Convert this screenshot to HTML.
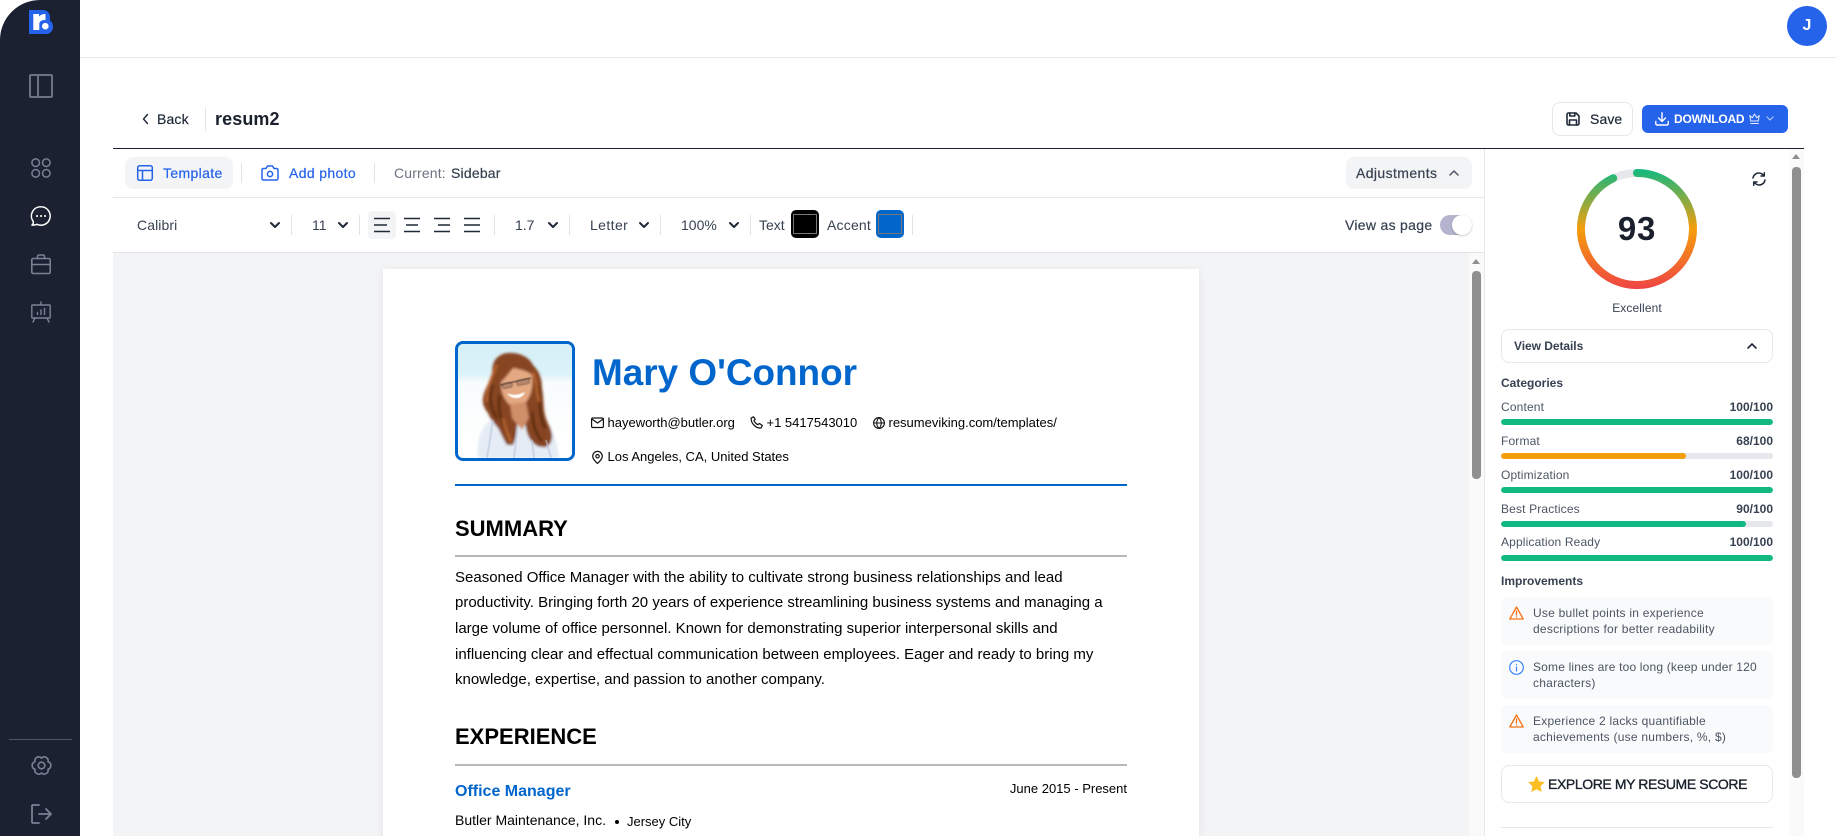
<!DOCTYPE html>
<html lang="en"><head><meta charset="utf-8"><title>resum2</title>
<style>
*{box-sizing:border-box;margin:0;padding:0}
html,body{width:1836px;height:836px;overflow:hidden;background:#fff;font-family:"Liberation Sans",Arial,sans-serif;color:#1f2937}
.a{position:absolute}
.t{position:absolute;white-space:nowrap;line-height:20px;height:20px}
.m{-webkit-text-stroke:.2px currentColor}
svg.i{position:absolute;fill:none;stroke:currentColor;stroke-linecap:round;stroke-linejoin:round;overflow:visible}
.sep{position:absolute;width:1px;background:#dfe2e7}
.lbl{font-size:12px;color:#4b5563;letter-spacing:.15px}
.val{font-size:12px;font-weight:700;color:#374151}
.bar{position:absolute;left:1501px;width:272px;height:6px;border-radius:3px;background:#e5e7eb;overflow:hidden}
.bar i{display:block;height:6px;border-radius:3px;background:#10b981}
.card{position:absolute;left:1501px;width:272px;height:48px;background:#f9fafb;border-radius:6px}
.imp{font-size:12px;color:#4b5563;line-height:16px;height:16px;letter-spacing:.24px}
.r{color:#000}
.p{font-size:15px;color:#000}
</style></head><body>

<svg width="0" height="0" style="position:absolute"><defs>
<symbol id="chev" viewBox="0 0 12 12"><path d="M2 4l4 4 4-4" fill="none" stroke="#1f2937" stroke-width="2" stroke-linecap="round" stroke-linejoin="round"/></symbol>
</defs></svg>

<!-- sidebar -->
<div class="a" style="left:0;top:0;width:80px;height:836px;background:#1b2130;border-top-left-radius:40px"></div>
<svg class="a" style="left:29px;top:10px" width="24" height="24" viewBox="0 0 24 24">
<path d="M0 0H14C18 0 21 3 21 7V10.500C23 12 24 14 24 16.500V17C24 21 21 24 17 24H0Z" fill="#2563eb"/>
<path d="M4.300 20V4H10V6.500C11.500 4.800 13.500 4 16.500 4V10C12.500 10 10.300 11 10.300 14.500V20Z" fill="#fff"/>
<circle cx="16.300" cy="16.200" r="3.300" fill="#fff"/></svg>
<svg class="i" style="left:29px;top:74px;color:#6b7280;stroke-width:2" width="24" height="24" viewBox="0 0 24 24"><rect x="1" y="1" width="22" height="22" rx="1"/><path d="M9 1v22"/></svg>
<svg class="i" style="left:31px;top:158px;color:#788296;stroke-width:1.500" width="20" height="20" viewBox="0 0 20 20"><circle cx="4.700" cy="4.700" r="3.800"/><circle cx="15.300" cy="4.700" r="3.800"/><circle cx="4.700" cy="15.300" r="3.800"/><circle cx="15.300" cy="15.300" r="3.800"/></svg>
<svg class="i" style="left:31px;top:206px;color:#fff;stroke-width:1.500" width="20" height="20" viewBox="0 0 20 20"><path d="M10 .8a9.200 9.200 0 1 1-4 17.500c-1.500.8-3 .9-5 .8 1-.9 1.500-2 1.300-3.500A9.200 9.200 0 0 1 10 .8z"/><path d="M6 10h.1M10 10h.1M14 10h.1" stroke-width="2"/></svg>
<svg class="i" style="left:31px;top:254px;color:#788296;stroke-width:1.600" width="20" height="20" viewBox="0 0 20 20"><rect x=".8" y="4.500" width="18.400" height="15" rx="1.500"/><path d="M6.500 4.500V2.500a1.500 1.500 0 0 1 1.500-1.500h4a1.500 1.500 0 0 1 1.500 1.500v2M.8 10.500h6.700M12.500 10.500h6.700M8 10.500h4"/></svg>
<svg class="i" style="left:31px;top:302px;color:#788296;stroke-width:1.400" width="20" height="20" viewBox="0 0 20 20"><rect x=".8" y="3" width="18.400" height="13" rx=".5"/><path d="M10 0v3M4 16l-2 4M16 16l2 4M6.500 12.500v-2M10 12.500v-4.500M13.500 12.500V6.500"/></svg>
<div class="a" style="left:9px;top:739px;width:63px;height:1px;background:#4b5563"></div>
<svg class="i" style="left:31px;top:755px;color:#788296;stroke-width:1.600" width="21" height="21" viewBox="0 0 21 21"><circle cx="10.500" cy="10.500" r="3.300"/><path d="M10.500 3A3.900 3.900 0 0 1 17 6.750A3.900 3.900 0 0 1 17 14.250A3.900 3.900 0 0 1 10.500 18A3.900 3.900 0 0 1 4 14.250A3.900 3.900 0 0 1 4 6.750A3.900 3.900 0 0 1 10.500 3Z"/></svg>
<svg class="i" style="left:31px;top:804px;color:#788296;stroke-width:1.800" width="21" height="20" viewBox="0 0 21 20"><path d="M8 1H2a1 1 0 0 0-1 1v16a1 1 0 0 0 1 1h6M8 10h12M15 5l5 5-5 5"/></svg>

<!-- top header -->
<div class="a" style="left:80px;top:57px;width:1756px;height:1px;background:#e8e9ec"></div>
<div class="a" style="left:1787px;top:6px;width:40px;height:40px;border-radius:50%;background:#2563eb;color:#fff;font-weight:700;font-size:16px;line-height:40px;text-align:center">J</div>

<!-- title row -->
<svg class="i" style="left:141px;top:113px;color:#1f2937;stroke-width:1.400" width="8" height="12" viewBox="0 0 8 12"><path d="M6.500 1.500L2.500 6l4 4.500"/></svg>
<div class="t m" style="left:157px;top:109px;font-size:14px;color:#1f2937;letter-spacing:.15px">Back</div>
<div class="sep" style="left:205px;top:107px;height:24px;background:#e5e7eb"></div>
<div class="t" style="left:215px;top:109px;font-size:18px;font-weight:700;color:#1a202c;letter-spacing:.1px">resum2</div>

<div class="a" style="left:1552px;top:102px;width:81px;height:34px;border:1px solid #e5e7eb;border-radius:8px"></div>
<svg class="i" style="left:1566px;top:112px;color:#1f2937;stroke-width:1.600" width="14" height="14" viewBox="0 0 14 14"><path d="M1 2.500A1.500 1.500 0 0 1 2.500 1H10l3 3v7.500a1.500 1.500 0 0 1-1.500 1.500h-9A1.500 1.500 0 0 1 1 11.500z"/><path d="M3.500 13V8h7v5M3.800 1v3h5V1"/></svg>
<div class="t m" style="left:1590px;top:109px;font-size:14px;color:#1f2937;letter-spacing:.1px">Save</div>

<div class="a" style="left:1642px;top:105px;width:146px;height:28px;background:#2563eb;border-radius:6px"></div>
<svg class="i" style="left:1655px;top:112px;color:#fff;stroke-width:1.400" width="14" height="14" viewBox="0 0 14 14"><path d="M7 .8v8.500M3.500 6L7 9.500 10.500 6M.8 9.500v2.200a1.300 1.300 0 0 0 1.300 1.300h9.800a1.300 1.300 0 0 0 1.300-1.300V9.500"/></svg>
<div class="t" style="left:1674px;top:109px;font-size:12px;font-weight:700;color:#fff;letter-spacing:-.2px">DOWNLOAD</div>
<svg class="i" style="left:1749px;top:113px;color:#e6ecfd;stroke-width:1" width="11" height="12" viewBox="0 0 11 12"><path d="M.8 2.500l2.500 2.300L5.500 1l2.200 3.800 2.500-2.300-.9 5.500H1.700zM1.700 10.500h7.600"/></svg>
<svg class="i" style="left:1766px;top:116px;color:#c4d3f8;stroke-width:1" width="8" height="5" viewBox="0 0 8 5"><path d="M.8.8L4 4 7.200.8"/></svg>

<div class="a" style="left:113px;top:148px;width:1691px;height:1px;background:#1a202c"></div>

<!-- toolbar 1 -->
<div class="a" style="left:125px;top:157px;width:108px;height:32px;background:#f3f4f6;border-radius:8px"></div>
<svg class="i" style="left:137px;top:165px;color:#2563eb;stroke-width:1.500" width="16" height="16" viewBox="0 0 16 16"><rect x=".7" y=".7" width="14.600" height="14.600" rx="2"/><path d="M.7 5.500h14.600M5.500 5.500v9.800"/></svg>
<div class="t m" style="left:163px;top:163px;font-size:14px;color:#2563eb;letter-spacing:.35px">Template</div>
<div class="sep" style="left:241px;top:163px;height:20px"></div>
<svg class="i" style="left:261px;top:165px;color:#2563eb;stroke-width:1.500" width="18" height="16" viewBox="0 0 18 16"><path d="M1 5a1.500 1.500 0 0 1 1.500-1.500H5L6.500 1h5L13 3.500h2.500A1.500 1.500 0 0 1 17 5v8.500a1.500 1.500 0 0 1-1.500 1.500h-13A1.500 1.500 0 0 1 1 13.500z"/><circle cx="9" cy="9" r="2.600"/></svg>
<div class="t m" style="left:289px;top:163px;font-size:14px;color:#2563eb;letter-spacing:.35px">Add photo</div>
<div class="sep" style="left:374px;top:163px;height:20px"></div>
<div class="t" style="left:394px;top:163px;font-size:14px;color:#6b7280;letter-spacing:.15px">Current:</div>
<div class="t m" style="left:451px;top:163px;font-size:14px;color:#374151;letter-spacing:.2px">Sidebar</div>
<div class="a" style="left:1346px;top:157px;width:126px;height:32px;background:#f3f4f6;border-radius:8px"></div>
<div class="t m" style="left:1356px;top:163px;font-size:14px;color:#374151;letter-spacing:.4px">Adjustments</div>
<svg class="i" style="left:1449px;top:170px;color:#4b5563;stroke-width:1.500" width="10" height="6" viewBox="0 0 10 6"><path d="M1 5l4-4 4 4"/></svg>
<div class="a" style="left:113px;top:197px;width:1372px;height:1px;background:#e5e7eb"></div>

<!-- toolbar 2 -->
<div class="t" style="left:137px;top:215px;font-size:14px;color:#374151;letter-spacing:.1px">Calibri</div>
<svg class="a" style="left:269px;top:219px" width="12" height="12"><use href="#chev"/></svg>
<div class="sep" style="left:291px;top:215px;height:20px"></div>
<div class="t" style="left:312px;top:215px;font-size:14px;color:#374151">11</div>
<svg class="a" style="left:337px;top:219px" width="12" height="12"><use href="#chev"/></svg>
<div class="sep" style="left:359px;top:215px;height:20px"></div>
<div class="a" style="left:368px;top:211px;width:28px;height:28px;background:#f3f4f6;border-radius:4px"></div>
<svg class="i" style="left:374px;top:217px;color:#1f2937;stroke-width:1.600;stroke-linecap:butt" width="106" height="16" viewBox="0 0 106 16">
<path d="M0 1.500h16M0 8h13M0 14.500h16"/>
<path d="M30 1.500h16M32 8h12M30 14.500h16"/>
<path d="M60 1.500h16M64 8h12M60 14.500h16"/>
<path d="M90 1.500h16M90 8h16M90 14.500h16"/></svg>
<div class="sep" style="left:494px;top:215px;height:20px"></div>
<div class="t" style="left:515px;top:215px;font-size:14px;color:#374151">1.7</div>
<svg class="a" style="left:547px;top:219px" width="12" height="12"><use href="#chev"/></svg>
<div class="sep" style="left:569px;top:215px;height:20px"></div>
<div class="t" style="left:590px;top:215px;font-size:14px;color:#374151;letter-spacing:.4px">Letter</div>
<svg class="a" style="left:638px;top:219px" width="12" height="12"><use href="#chev"/></svg>
<div class="sep" style="left:660px;top:215px;height:20px"></div>
<div class="t" style="left:681px;top:215px;font-size:14px;color:#374151">100%</div>
<svg class="a" style="left:728px;top:219px" width="12" height="12"><use href="#chev"/></svg>
<div class="sep" style="left:750px;top:215px;height:20px"></div>
<div class="t" style="left:759px;top:215px;font-size:14px;color:#374151">Text</div>
<div class="a" style="left:791px;top:210px;width:28px;height:28px;background:#000;border-radius:5px"></div>
<div class="a" style="left:793px;top:214px;width:24px;height:20px;border:1px solid #777"></div>
<div class="t" style="left:827px;top:215px;font-size:14px;color:#374151;letter-spacing:.2px">Accent</div>
<div class="a" style="left:876px;top:210px;width:28px;height:28px;background:#0066cc;border-radius:5px"></div>
<div class="a" style="left:878px;top:214px;width:24px;height:20px;border:1px solid #777"></div>
<div class="sep" style="left:912px;top:215px;height:20px"></div>
<div class="t m" style="left:1345px;top:215px;font-size:14px;color:#374151;letter-spacing:.3px">View as page</div>
<div class="a" style="left:1440px;top:215px;width:32px;height:20px;border-radius:10px;background:#b4b4cf"></div>
<div class="a" style="left:1452px;top:215px;width:20px;height:20px;border-radius:50%;background:#fff;box-shadow:0 1px 2px rgba(0,0,0,.2)"></div>
<div class="a" style="left:113px;top:252px;width:1372px;height:1px;background:#e1e4e9"></div>

<!-- canvas -->
<div class="a" style="left:113px;top:253px;width:1356px;height:583px;background:#f3f4f6"></div>
<div class="a" style="left:1469px;top:253px;width:15px;height:583px;background:#fafafa"></div>
<div class="a" style="left:1484px;top:149px;width:1px;height:687px;background:#e5e7eb"></div>
<div class="a" style="left:1472px;top:259px;width:0;height:0;border-left:4px solid transparent;border-right:4px solid transparent;border-bottom:5px solid #8f8f8f"></div>
<div class="a" style="left:1472px;top:271px;width:9px;height:208px;border-radius:4px;background:#8f8f8f"></div>

<!-- page -->
<div class="a" style="left:383px;top:269px;width:816px;height:567px;background:#fff;box-shadow:0 2px 8px rgba(0,0,0,.08)"></div>

<div class="a" style="left:455px;top:341px;width:120px;height:120px;border:3px solid #0066cc;border-radius:8px;overflow:hidden;background:#fff">
<svg width="114" height="114" viewBox="458 344 114 114" style="display:block">
<defs><linearGradient id="sky" x1="0" y1="0" x2="0" y2="1"><stop offset="0" stop-color="#d6f0f8"/><stop offset=".26" stop-color="#dcf2f9"/><stop offset=".34" stop-color="#f8fcfd"/><stop offset="1" stop-color="#ffffff"/></linearGradient>
<filter id="b" x="-10%" y="-10%" width="120%" height="120%"><feGaussianBlur stdDeviation="1.200"/></filter>
<filter id="b2" x="-20%" y="-20%" width="140%" height="140%"><feGaussianBlur stdDeviation=".6"/></filter></defs>
<rect x="458" y="344" width="114" height="114" fill="url(#sky)"/>
<g filter="url(#b)">
<path d="M478 458C477 440 480 424 496 417L540 417C552 424 557 440 559 458Z" fill="#e6ecf5"/>
<path d="M508 353C520 352 530 358 533 365C540 372 542 380 542 388C544 398 543 406 545 415C547 424 553 430 552 438C551 445 547 448 542 447C536 447 530 441 528 435C526 431 526 427 525 423L517 425C517 432 516 440 513 445L507 445C503 439 501 433 498 428C494 423 490 419 488 413C484 408 482 403 483 398C484 390 489 383 492 375C492 368 493 363 495 360C498 356 503 353 508 353Z" fill="#874520"/>
<path d="M493 385C488 396 490 408 497 418M500 395C497 408 500 420 508 432M538 385C541 400 538 412 545 428M532 412C533 425 536 435 542 441" stroke="#56290f" stroke-width="2.500" fill="none"/>
<path d="M497 365C491 378 486 390 487 402M533 372C537 382 537 392 539 402M503 418C505 428 509 436 511 442" stroke="#b5642f" stroke-width="2.500" fill="none"/>
<path d="M513 368C519 369 528 371 532 375C533 383 532 390 530 395C527 402 522 408 517 408C511 408 506 402 503 395C501 390 501 386 501 382C505 378 510 372 513 368Z" fill="#e4a982"/>
<path d="M510 404L526 402L529 418L522 430L512 418Z" fill="#cf8f69"/>
</g>
<g filter="url(#b2)">
<path d="M507 393C513 396 519 395 525 392C523 399 512 401 507 393Z" fill="#fff"/>
<path d="M500 385L531 378" stroke="#3a2a26" stroke-width="1"/>
<rect x="502.500" y="383" width="10" height="5" rx="2" fill="#8a6355" opacity=".5" stroke="#2e2220" stroke-width=".9" transform="rotate(-12 507 386)"/>
<rect x="516.500" y="379.500" width="13" height="5" rx="2" fill="#8a6355" opacity=".5" stroke="#2e2220" stroke-width=".9" transform="rotate(-12 523 382)"/>
<path d="M493 420L487 458M517 430L514 458M532 440L534 458M546 440L551 458" stroke="#b7c5da" stroke-width="1.200" fill="none"/>
</g>
</svg></div>

<div class="t r" style="left:592px;top:353px;height:40px;line-height:40px;font-size:36.900px;font-weight:700;color:#0066cc">Mary O'Connor</div>
<svg class="i" style="left:591px;top:416px;color:#111;stroke-width:1.200" width="13" height="13" viewBox="0 0 13 13"><rect x=".6" y="2" width="11.800" height="9.500" rx="1.200"/><path d="M.8 3l5.700 4 5.700-4"/></svg>
<div class="t r" style="left:607.500px;top:413px;font-size:13px">hayeworth@butler.org</div>
<svg class="i" style="left:750px;top:416px;color:#111;stroke-width:1.200" width="13" height="13" viewBox="0 0 13 13"><path d="M3.500.8L1.200 2C.8 7 5.500 12.500 11 12l1.300-2.500-2.800-2-1.600 1.200C6.300 8 4.500 6 4 4.700l1.200-1.400z"/></svg>
<div class="t r" style="left:766.500px;top:413px;font-size:13px">+1 5417543010</div>
<svg class="i" style="left:873px;top:417px;color:#111;stroke-width:1.100" width="12" height="12" viewBox="0 0 12 12"><circle cx="6" cy="6" r="5.400"/><path d="M.6 6h10.800M6 .6c3 2.800 3 8 0 10.800M6 .6c-3 2.800-3 8 0 10.800"/></svg>
<div class="t r" style="left:888.500px;top:413px;font-size:13px">resumeviking.com/templates/</div>
<svg class="i" style="left:592px;top:451px;color:#111;stroke-width:1.200" width="11" height="13" viewBox="0 0 11 13"><path d="M5.500 12.500C3 10 .7 8 .7 5.200a4.800 4.800 0 0 1 9.600 0C10.300 8 8 10 5.500 12.500z"/><circle cx="5.500" cy="5.200" r="1.700"/></svg>
<div class="t r" style="left:607.500px;top:447px;font-size:13px">Los Angeles, CA, United States</div>
<div class="a" style="left:455px;top:484px;width:672px;height:2px;background:#0066cc"></div>

<div class="t r" style="left:455px;top:519px;font-size:22px;font-weight:700">SUMMARY</div>
<div class="a" style="left:455px;top:555px;width:672px;height:2px;background:#b8b8b8"></div>
<div class="t p" style="left:455px;top:568px">Seasoned Office Manager with the ability to cultivate strong business relationships and lead</div>
<div class="t p" style="left:455px;top:593px">productivity. Bringing forth 20 years of experience streamlining business systems and managing a</div>
<div class="t p" style="left:455px;top:619px">large volume of office personnel. Known for demonstrating superior interpersonal skills and</div>
<div class="t p" style="left:455px;top:645px">influencing clear and effectual communication between employees. Eager and ready to bring my</div>
<div class="t p" style="left:455px;top:670px">knowledge, expertise, and passion to another company.</div>
<div class="t r" style="left:455px;top:727px;font-size:22px;font-weight:700">EXPERIENCE</div>
<div class="a" style="left:455px;top:764px;width:672px;height:2px;background:#b8b8b8"></div>
<div class="t" style="left:455px;top:782px;font-size:16px;font-weight:700;color:#0066cc">Office Manager</div>
<div class="t r" style="right:709px;top:779px;font-size:13px">June 2015 - Present</div>
<div class="t r" style="left:455px;top:810px;font-size:14px">Butler Maintenance, Inc.</div>
<div class="a" style="left:614.500px;top:820px;width:4px;height:4px;border-radius:50%;background:#000"></div>
<div class="t r" style="left:627px;top:812px;font-size:13px">Jersey City</div>

<!-- right panel -->
<svg class="a" style="left:1577px;top:169px" width="120" height="120" viewBox="0 0 120 120">
<defs><linearGradient id="g" gradientUnits="userSpaceOnUse" x1="60" y1="0" x2="60" y2="120"><stop offset="0" stop-color="#10b981"/><stop offset=".5" stop-color="#f59e0b"/><stop offset="1" stop-color="#ef4444"/></linearGradient></defs>
<circle cx="60" cy="60" r="56" fill="none" stroke="#e5e7eb" stroke-width="8"/>
<path d="M60 4A56 56 0 1 1 36.200 9.300" fill="none" stroke="url(#g)" stroke-width="8" stroke-linecap="round"/>
</svg>
<div class="t" style="left:1577px;top:213px;width:120px;height:32px;line-height:32px;text-align:center;font-size:33px;font-weight:700;color:#1a202c;letter-spacing:.8px">93</div>
<svg class="i" style="left:1752px;top:172px;color:#1f2937;stroke-width:1.500" width="14" height="14" viewBox="0 0 14 14"><path d="M1 6C1.500 3 4 1 7 1c2 0 3.500 1 5 2.800M12.300.8v3.200H9M13 8c-.5 3-3 5-6 5-2 0-3.500-1-5-2.800M1.700 13.200V10H5"/></svg>
<div class="t" style="left:1577px;top:298px;width:120px;text-align:center;font-size:12px;color:#374151;letter-spacing:.1px">Excellent</div>

<div class="a" style="left:1501px;top:329px;width:272px;height:34px;border:1px solid #e5e7eb;border-radius:8px"></div>
<div class="t" style="left:1514px;top:336px;font-size:12px;font-weight:700;color:#374151;letter-spacing:-.05px">View Details</div>
<svg class="i" style="left:1747px;top:343px;color:#1f2937;stroke-width:1.600" width="10" height="6" viewBox="0 0 10 6"><path d="M1 5l4-4 4 4"/></svg>

<div class="t" style="left:1501px;top:373px;font-size:12px;font-weight:700;color:#374151">Categories</div>
<div class="t lbl" style="left:1501px;top:397px">Content</div><div class="t val" style="right:63px;top:397px">100/100</div>
<div class="bar" style="top:419px"><i style="width:100%"></i></div>
<div class="t lbl" style="left:1501px;top:431px">Format</div><div class="t val" style="right:63px;top:431px">68/100</div>
<div class="bar" style="top:453px"><i style="width:68%;background:#f59e0b"></i></div>
<div class="t lbl" style="left:1501px;top:465px">Optimization</div><div class="t val" style="right:63px;top:465px">100/100</div>
<div class="bar" style="top:487px"><i style="width:100%"></i></div>
<div class="t lbl" style="left:1501px;top:499px">Best Practices</div><div class="t val" style="right:63px;top:499px">90/100</div>
<div class="bar" style="top:521px"><i style="width:90%"></i></div>
<div class="t lbl" style="left:1501px;top:532px">Application Ready</div><div class="t val" style="right:63px;top:532px">100/100</div>
<div class="bar" style="top:555px"><i style="width:100%"></i></div>

<div class="t" style="left:1501px;top:571px;font-size:12px;font-weight:700;color:#374151">Improvements</div>
<div class="card" style="top:597px"></div>
<div class="card" style="top:651px"></div>
<div class="card" style="top:705px"></div>
<svg class="i" style="left:1509px;top:606px;color:#f97316;stroke-width:1.300" width="15" height="14" viewBox="0 0 15 14"><path d="M7.500 1L.8 13h13.400zM7.500 5v4M7.500 11h.1"/></svg>
<div class="t imp" style="left:1533px;top:605px">Use bullet points in experience</div>
<div class="t imp" style="left:1533px;top:621px">descriptions for better readability</div>
<svg class="i" style="left:1509px;top:660px;color:#3b82f6;stroke-width:1.200" width="15" height="15" viewBox="0 0 15 15"><circle cx="7.500" cy="7.500" r="6.800"/><path d="M7.500 7v4M7.500 4.500h.1"/></svg>
<div class="t imp" style="left:1533px;top:659px;letter-spacing:.18px">Some lines are too long (keep under 120</div>
<div class="t imp" style="left:1533px;top:675px">characters)</div>
<svg class="i" style="left:1509px;top:714px;color:#f97316;stroke-width:1.300" width="15" height="14" viewBox="0 0 15 14"><path d="M7.500 1L.8 13h13.400zM7.500 5v4M7.500 11h.1"/></svg>
<div class="t imp" style="left:1533px;top:713px">Experience 2 lacks quantifiable</div>
<div class="t imp" style="left:1533px;top:729px">achievements (use numbers, %, $)</div>

<div class="a" style="left:1501px;top:765px;width:272px;height:38px;border:1px solid #e5e7eb;border-radius:8px"></div>
<svg class="a" style="left:1528px;top:776px" width="17" height="16" viewBox="0 0 24 23"><path d="M12 0l3.700 7.700 8.300 1.100-6.100 5.800 1.500 8.400L12 19l-7.400 4 1.500-8.400L0 8.800l8.300-1.100z" fill="#fbbf24"/></svg>
<div class="t" style="left:1548px;top:774px;font-size:14px;color:#1a202c;letter-spacing:-.4px;-webkit-text-stroke:.35px #1a202c">EXPLORE MY RESUME SCORE</div>
<div class="a" style="left:1501px;top:827px;width:272px;height:1px;background:#e5e7eb"></div>

<!-- right scrollbar -->
<div class="a" style="left:1789px;top:149px;width:15px;height:687px;background:#fafafa"></div>
<div class="a" style="left:1792px;top:154px;width:0;height:0;border-left:4px solid transparent;border-right:4px solid transparent;border-bottom:5px solid #8f8f8f"></div>
<div class="a" style="left:1792px;top:167px;width:9px;height:611px;border-radius:4px;background:#8f8f8f"></div>
</body></html>
